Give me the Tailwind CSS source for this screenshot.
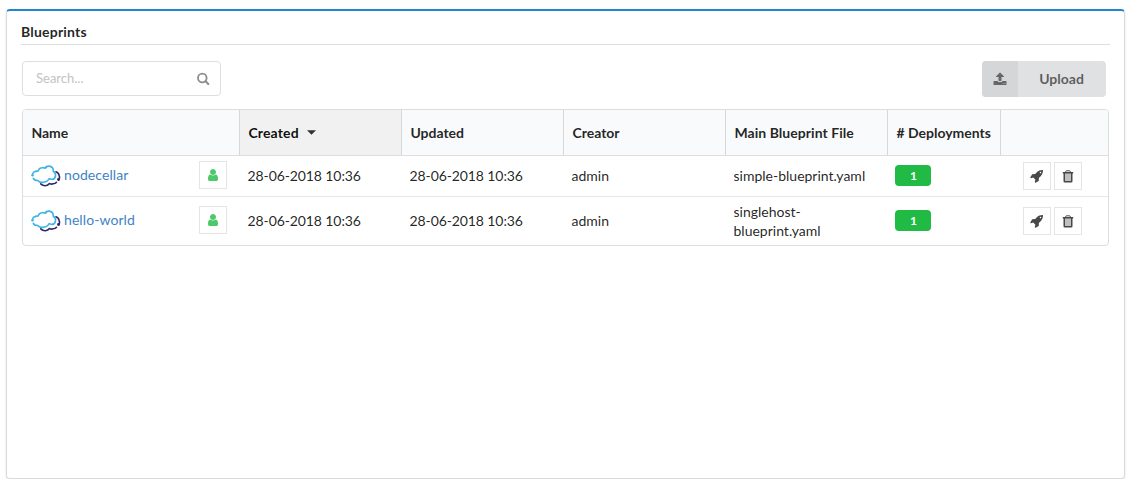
<!DOCTYPE html>
<html lang="en">
<head>
<meta charset="utf-8">
<title>Blueprints</title>
<script src="https://cdn.jsdelivr.net/npm/@tailwindcss/browser@4"></script>
</head>
<body class="bg-white font-['Lato',sans-serif] text-[14px] leading-[19px] text-black/87">
<svg class="hidden">
  <symbol id="search" viewBox="0 0 14 14"><circle cx="6.300" cy="6" r="4.300" fill="none" stroke="currentColor" stroke-width="1.800"/><path d="M9.600 9.300l2.700 2.700" fill="none" stroke="currentColor" stroke-width="2" stroke-linecap="round"/></symbol>
  <symbol id="upload" viewBox="0 0 1792 1792"><path d="M1344 1472q0-26-19-45t-45-19-45 19-19 45 19 45 45 19 45-19 19-45zm256 0q0-26-19-45t-45-19-45 19-19 45 19 45 45 19 45-19 19-45zm128-224v320q0 40-28 68t-68 28h-1472q-40 0-68-28t-28-68v-320q0-40 28-68t68-28h427q21 56 70.5 92t110.5 36h256q61 0 110.5-36t70.5-92h427q40 0 68 28t28 68zm-325-648q-17 40-59 40h-256v448q0 26-19 45t-45 19h-256q-26 0-45-19t-19-45v-448h-256q-42 0-59-40-17-39 14-69l448-448q18-19 45-19t45 19l448 448q31 30 14 69z"/></symbol>
  <symbol id="user" viewBox="0 0 1792 1792"><path d="M1536 1399q0 109-62.5 187t-150.5 78h-854q-88 0-150.5-78t-62.5-187q0-85 8.5-160.5t31.5-152 58.5-131 94-89 134.5-34.5q131 128 313 128t313-128q76 0 134.5 34.5t94 89 58.5 131 31.5 152 8.5 160.5zm-256-887q0 159-112.5 271.5t-271.5 112.5-271.5-112.5-112.5-271.5 112.5-271.5 271.5-112.5 271.5 112.5 112.5 271.5z"/></symbol>
  <symbol id="rocket" viewBox="0 0 1792 1792"><path d="M1440 448q0-40-28-68t-68-28-68 28-28 68 28 68 68 28 68-28 28-68zm224-288q0 249-75.5 430.5t-253.5 360.5q-81 80-195 176l-20 379q-2 16-16 26l-384 224q-7 4-16 4-12 0-23-9l-64-64q-13-14-8-32l85-276-281-281-276 85q-3 1-9 1-14 0-23-9l-64-64q-17-19-5-39l224-384q10-14 26-16l379-20q96-114 176-195 188-187 358-258t431-71q14 0 24 9.5t10 22.5z"/></symbol>
  <symbol id="trash" viewBox="0 0 12 13"><path d="M2 3h8v8.500H2z" fill="#bfbfbf"/><path d="M.8 2h10.400v1.500H.8zM1.500 3H3v8h6V3h1.500v8.200q0 1.300-1.300 1.300H2.800q-1.300 0-1.300-1.300z"/><path d="M3.500 2.300Q3.600.8 4.600.8h2.800q1 0 1.100 1.500" fill="none" stroke="currentColor" stroke-width="1"/></symbol>
  <symbol id="cloud" viewBox="0 0 30 22">
    <g fill="none" stroke-linecap="round" stroke-linejoin="round" stroke-width="1.600">
      <path d="M9.800 18.900Q11.500 20.800 14.500 20.700Q17 20.500 18.500 18.500Q20.500 19.500 22 18.800Q24.300 18.900 25.500 17.300M25 6.700Q27.800 7.700 28 10.300Q29.200 12.300 27.700 14.800" stroke="#2f2866"/>
      <path d="M1.500 10.300Q1.200 6.300 7.200 5.900Q8 2.800 11 2.700Q12.800 2.400 13.800 3.200Q15.300 1 18 1.100Q22.500 1.500 22.300 6.200Q25 7.800 24.500 11Q23.800 14.700 20.500 14.300Q19.200 14.400 18.200 13.700Q16 17.500 11.500 17.400Q8 17.400 6.800 15.500Q3 15.500 2.300 13.200" stroke="#3fb4e5"/>
    </g>
    <circle cx="1.500" cy="10.300" r="1.200" fill="#3fb4e5"/><circle cx="15" cy="2.600" r="1" fill="#3fb4e5"/><circle cx="27.500" cy="14.500" r="1.400" fill="#2f2866"/>
  </symbol>
</svg>
<div class="pt-[9px] pl-[6px]">
  <main class="h-[470px] w-[1119px] rounded-[4px] border border-t-2 border-[#d9dadb] border-t-[#2185d0] pl-[14px] pr-[14px] shadow-[0_1px_2px_0_rgba(34,36,38,0.15)]">
    <h1 class="h-[34px] border-b border-[#dededf] pt-[11px] font-bold tracking-[0.2px]">Blueprints</h1>
    <div class="mt-[16px] ml-px mr-[4px] flex h-[36px] justify-between">
      <label class="flex h-[35px] w-[199px] items-center justify-between rounded-[4px] border border-[#dededf] pl-[13px] pr-[10px]">
        <span class="text-[13px] text-[#c3c3c3]">Search...</span>
        <svg class="size-[14px] text-[#8c8c8c]"><use href="#search"/></svg>
      </label>
      <button class="flex w-[124px] items-center overflow-hidden rounded-[4px] bg-[#e0e1e2] font-bold text-black/60">
        <span class="flex h-full w-[36px] items-center justify-center bg-[#d5d6d7]"><svg class="size-[14px] fill-[#656666]"><use href="#upload"/></svg></span>
        <span class="flex-1 pr-px pb-px text-center">Upload</span>
      </button>
    </div>
    <section class="mt-[12px] ml-px w-[1087px] overflow-hidden rounded-[4px] border border-[#dcddde]">
      <div class="grid h-[46px] grid-cols-[216px_162px_162px_162px_162px_113px_1fr] border-b border-[#dededf] bg-[#f9fafb] font-bold text-black/87 *:flex *:items-center *:border-l *:border-[#d6d7d8] *:pl-[8.4px]">
        <div class="border-l-0!">Name</div>
        <div class="gap-[8px] bg-[#f1f1f1] tracking-[0.15px] text-black/95">Created <svg class="h-[5px] w-[9px]" viewBox="0 0 9 5"><path d="M0 .3h9L4.500 4.800z" fill="#333"/></svg></div>
        <div>Updated</div>
        <div>Creator</div>
        <div class="whitespace-nowrap tracking-[0.05px]">Main Blueprint File</div>
        <div class="whitespace-nowrap"># Deployments</div>
        <div></div>
      </div>
      <div class="grid h-[41px] grid-cols-[216px_162px_162px_162px_162px_113px_1fr] items-center border-b border-[#e7e7e8] *:pl-[8.500px]">
        <div class="flex items-center pr-[12px] pb-[2px] pl-[8px]!">
          <svg class="mt-[2px] h-[22px] w-[30px]"><use href="#cloud"/></svg>
          <a class="ml-[3px] flex-1 pb-[2px] tracking-[0.08px] text-[#4183c4]">nodecellar</a>
          <span class="grid size-[28px] place-items-center border border-[#e5e5e6]"><svg class="size-[14px] fill-[#4dc86a]"><use href="#user"/></svg></span>
        </div>
        <div class="pb-[2px] tracking-[-0.1px]">28-06-2018 10:36</div>
        <div class="pb-[2px] tracking-[-0.1px]">28-06-2018 10:36</div>
        <div class="pb-[2px]">admin</div>
        <div class="whitespace-nowrap pb-[2px]">simple-blueprint.yaml</div>
        <div class="pb-[2px] pl-[8px]!"><span class="flex h-[21px] w-[36px] items-center justify-center rounded-[4px] bg-[#21ba45] pl-px text-[12px] font-bold text-white">1</span></div>
        <div class="flex gap-[3px] pl-[23px]!">
          <span class="grid size-[28px] place-items-center border border-[#e5e5e6]"><svg class="size-[14px] fill-[#484848]"><use href="#rocket"/></svg></span>
          <span class="grid size-[28px] place-items-center border border-[#e5e5e6]"><svg class="h-[13px] w-[12px] fill-[#484848] text-[#484848]"><use href="#trash"/></svg></span>
        </div>
      </div>
      <div class="grid h-[48px] grid-cols-[216px_162px_162px_162px_162px_113px_1fr] items-center *:pl-[8.500px]">
        <div class="flex items-center pr-[12px] pb-[2px] pl-[8px]!">
          <svg class="mt-[2px] h-[22px] w-[30px]"><use href="#cloud"/></svg>
          <a class="ml-[3px] flex-1 pb-[2px] tracking-[0.08px] text-[#4183c4]">hello-world</a>
          <span class="grid size-[28px] place-items-center border border-[#e5e5e6]"><svg class="size-[14px] fill-[#4dc86a]"><use href="#user"/></svg></span>
        </div>
        <div class="pb-[2px] tracking-[-0.1px]">28-06-2018 10:36</div>
        <div class="pb-[2px] tracking-[-0.1px]">28-06-2018 10:36</div>
        <div class="pb-[2px]">admin</div>
        <div>singlehost-<br>blueprint.yaml</div>
        <div class="pb-[2px] pl-[8px]!"><span class="flex h-[21px] w-[36px] items-center justify-center rounded-[4px] bg-[#21ba45] pl-px text-[12px] font-bold text-white">1</span></div>
        <div class="flex gap-[3px] pl-[23px]!">
          <span class="grid size-[28px] place-items-center border border-[#e5e5e6]"><svg class="size-[14px] fill-[#484848]"><use href="#rocket"/></svg></span>
          <span class="grid size-[28px] place-items-center border border-[#e5e5e6]"><svg class="h-[13px] w-[12px] fill-[#484848] text-[#484848]"><use href="#trash"/></svg></span>
        </div>
      </div>
    </section>
  </main>
</div>
</body>
</html>
